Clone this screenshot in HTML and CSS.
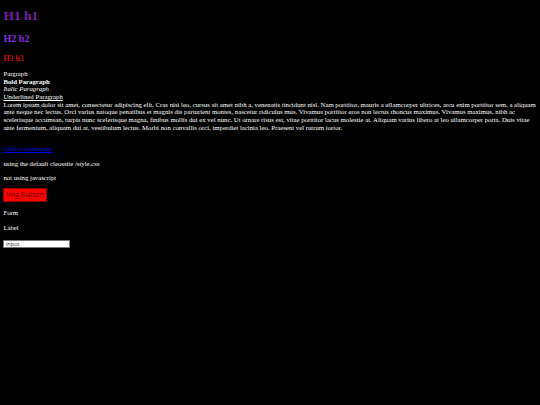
FILE: index.html
```html
<!DOCTYPE html>
<html>
<head>
<meta charset="utf-8">
<link rel="stylesheet" href="styles.css">
</head>
<body>
<h1 class="t1">H1 h1</h1>
<h2 class="t2">H2 h2</h2>
<h3 class="t3">H3 h3</h3>
<div class="para">
Pargraph<br>
<b>Bold Paragraph</b><br>
<i>Italic Paragraph</i><br>
<u>Underlined Paragraph</u><br>
Lorem ipsum dolor sit amet, consectetur adipiscing elit. Cras nisi leo, cursus sit amet nibh a, venenatis tincidunt nisl. Nam porttitor, mauris a ullamcorper ultrices, arcu enim porttitor sem, a aliquam ante neque nec lectus. Orci varius natoque penatibus et magnis dis parturient montes, nascetur ridiculus mus. Vivamus porttitor eros non lectus rhoncus maximus. Vivamus maximus, nibh ac scelerisque accumsan, turpis nunc scelerisque magna, finibus mollis dui ex vel nunc. Ut ornare risus est, vitae porttitor lacus molestie at. Aliquam varius libero at leo ullamcorper porta. Duis vitae ante fermentum, aliquam dui at, vestibulum lectus. Morbi non convallis orci, imperdiet lacinia leo. Praesent vel rutrum tortor.
</div>
<p class="p first"><a class="lnk" href="#">Link to homepage</a></p>
<p class="p">using the default cleossite /style.css</p>
<p class="p">not using javascript</p>
<button class="btn">Img Button</button>
<p class="p form">Form</p>
<p class="p">Label</p>
<input class="inp" type="text" value="input">
</body>
</html>
```
FILE: styles.css
```css
html { background: #000; }
body {
  margin: 0 3.375px;
  padding-top: 0.1px;
  background: #000;
  color: #fff;
  font-family: "Liberation Serif", "Times New Roman", serif;
  font-size: 6.75px;
  line-height: 7.65px;
}
.t1 { font-size: 13.5px; line-height: 15.5px; margin: 8.4px 0 0; color: #7b1fa8; }
.t2 { font-size: 10.125px; line-height: 11.6px; margin: 9.5px 0 0; color: #8a2be2; }
.t3 { font-size: 7.9px; line-height: 9.2px; margin: 9.3px 0 0; color: #cc1111; }
.para { margin-top: 6.5px; }
.p { margin: 6.8px 0 0; }
.p.first { margin-top: 13.9px; }
.p.form { margin-top: 7.7px; }
.lnk { color: #0000ee; }
.btn {
  display: block;
  box-sizing: border-box;
  height: 13.3px;
  margin: 6.5px 0 0;
  padding: 0 2px;
  font-family: "Open Sans", "DejaVu Sans", sans-serif;
  font-size: 7.2px;
  line-height: 11px;
  background: #f00;
  color: #5a0000;
  border: 1px solid #900;
}
.inp {
  display: block;
  box-sizing: border-box;
  width: 66.5px;
  height: 8.3px;
  margin: 8.15px 0 0;
  padding: 0 1.5px;
  font-family: "Open Sans", "DejaVu Sans", sans-serif;
  font-size: 5.6px;
  color: #333;
  background: #fff;
  border: 1px solid #777;
}
```
